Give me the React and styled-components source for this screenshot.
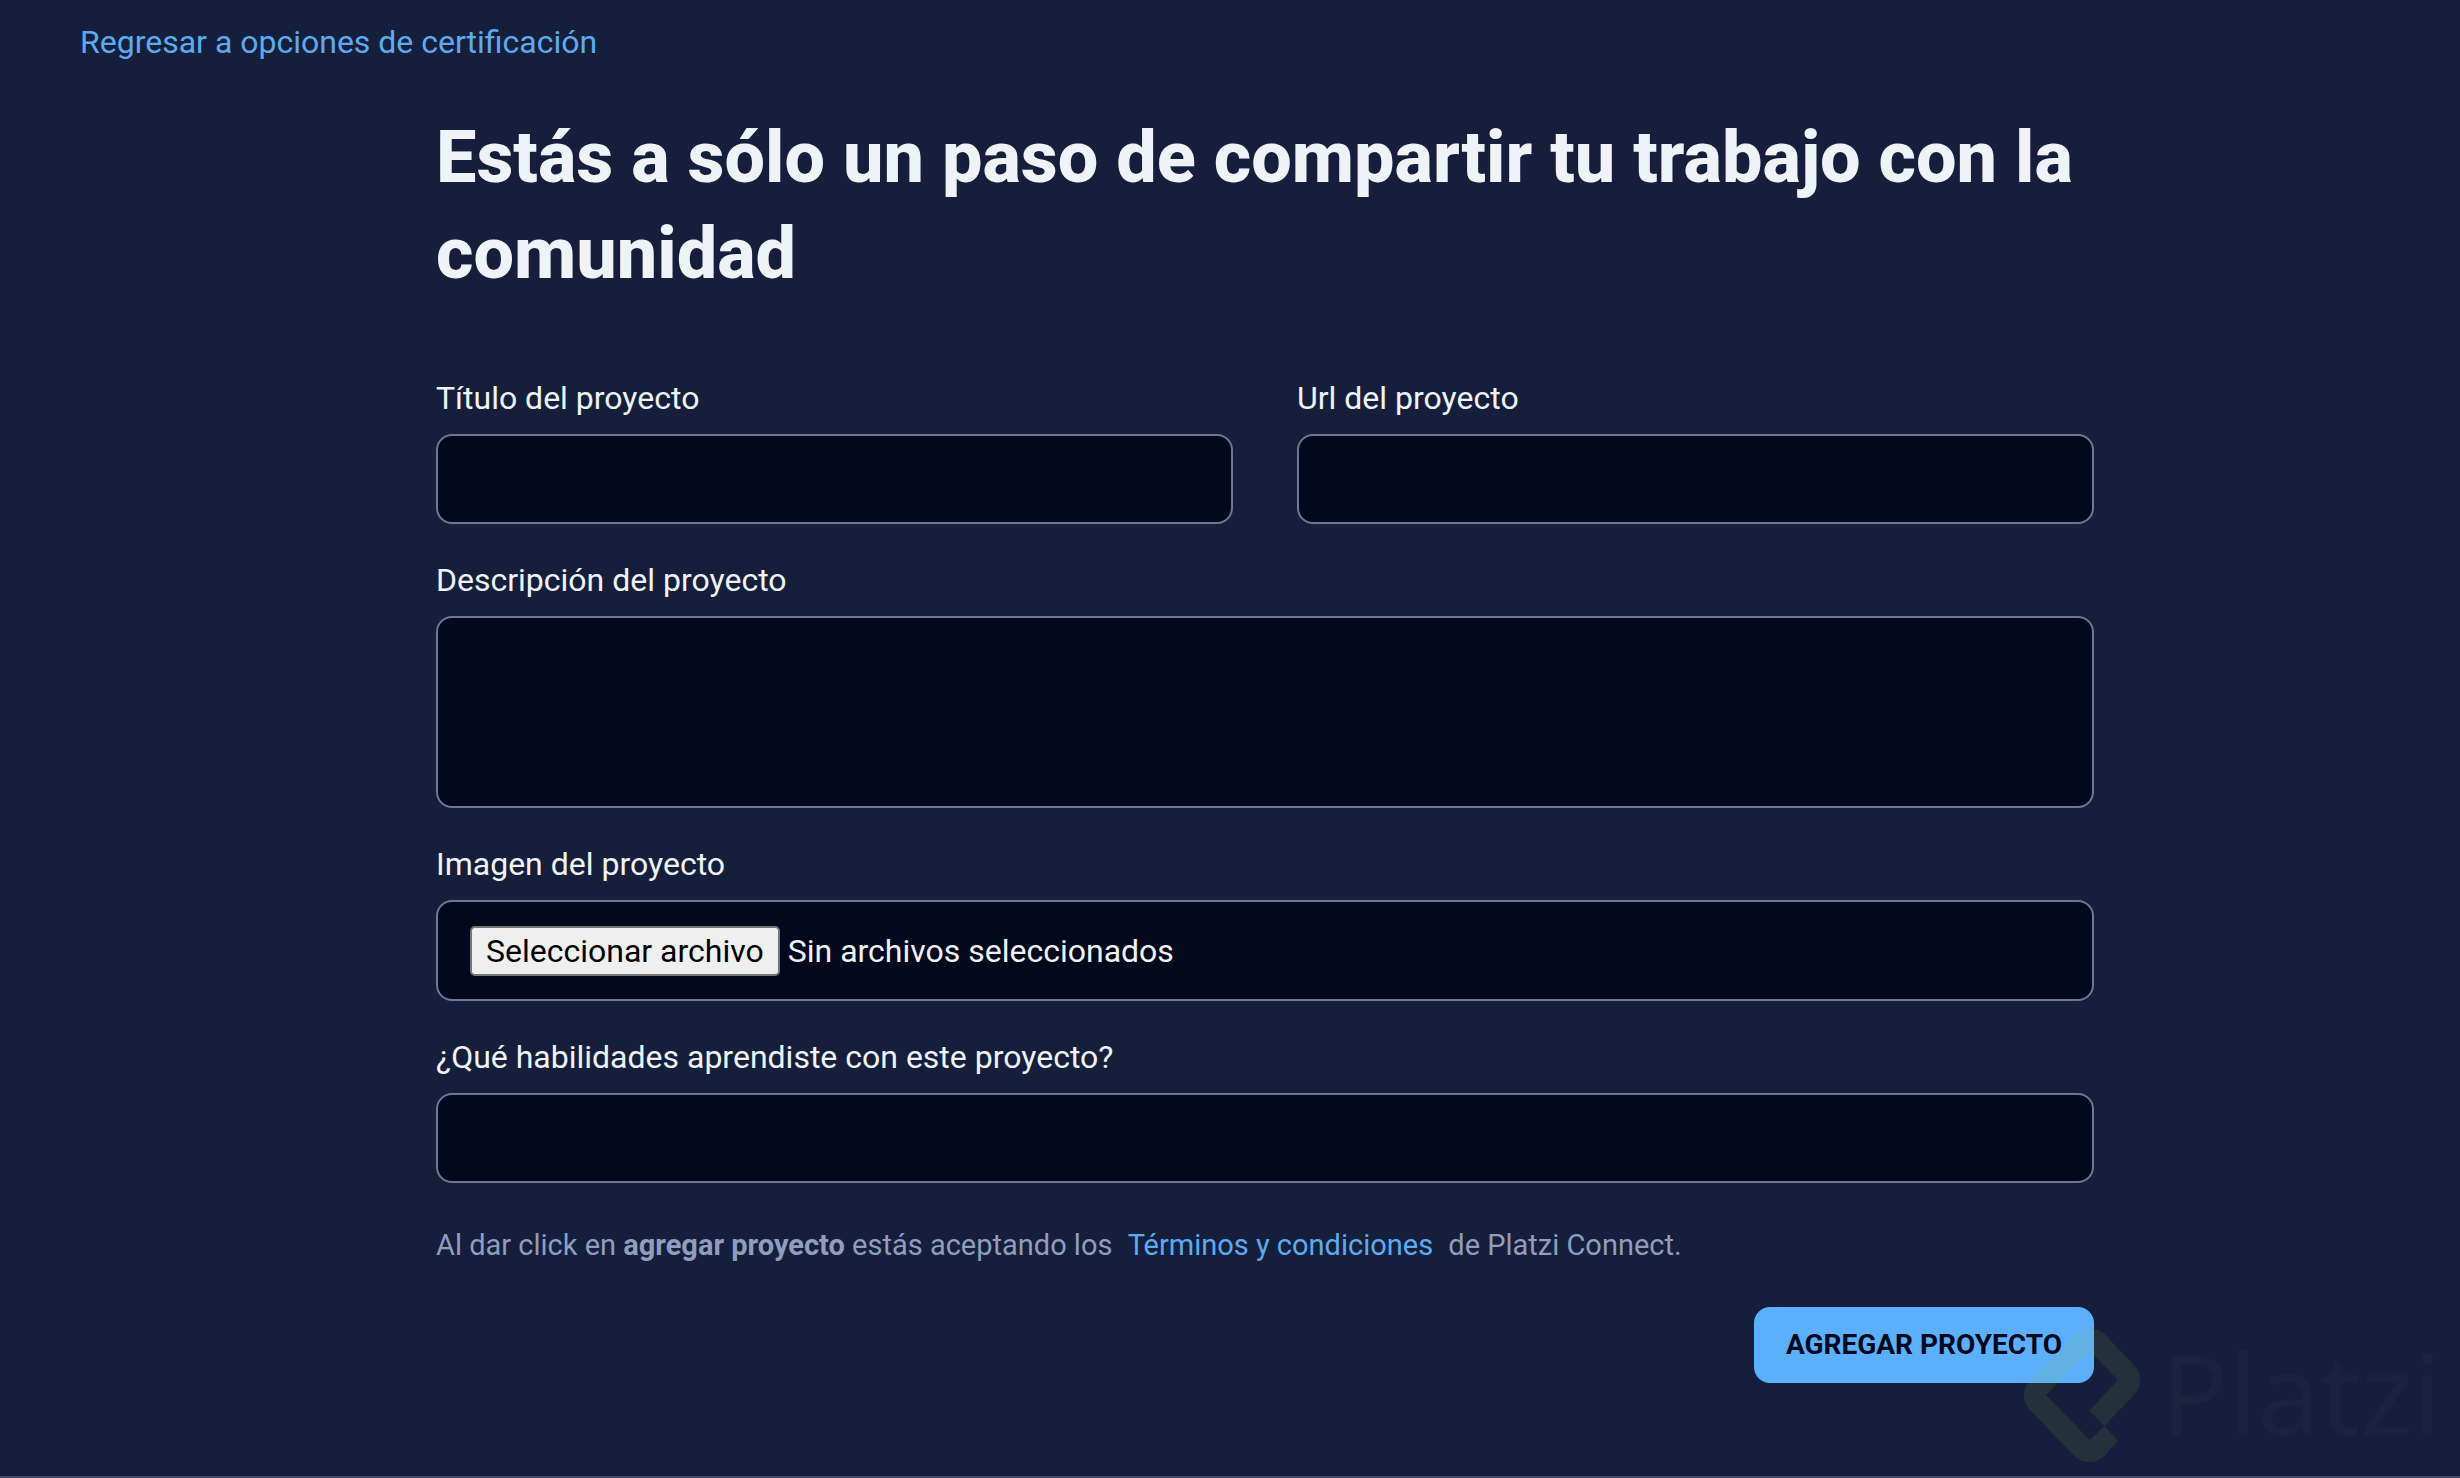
import React, { useState } from "react";
import styled, { createGlobalStyle, css } from "styled-components";

const color = {
  page: "#151f3b",
  field: "#03081c",
  border: "#6d7895",
  text: "#eff3f8",
  muted: "#909dbd",
  link: "#5eaaf0",
  action: "#5caffa",
  ink: "#03091e",
  rule: "#434a63",
};

const GlobalStyle = createGlobalStyle`
  *, *::before, *::after { box-sizing: border-box; }
  body {
    margin: 0;
    background: ${color.page};
    color: ${color.text};
    font-family: Roboto, "Liberation Sans", sans-serif;
    font-size: 32px;
    line-height: 40px;
  }
`;

const Page = styled.div`
  position: relative;
  display: flex;
  flex-direction: column;
  min-height: 100vh;
  overflow: hidden;
  border-bottom: 2px solid ${color.rule};
`;

const TopBar = styled.nav`
  padding: 22px 80px;
`;

const Link = styled.a`
  color: ${color.link};
  text-decoration: none;
`;

const Main = styled.main`
  padding: 26px 366px 90px 436px;
`;

const Title = styled.h1`
  margin: 0 0 76px;
  font-size: 72px;
  line-height: 96px;
  font-weight: 800;
`;

const Form = styled.form`
  display: flex;
  flex-direction: column;
  gap: 36px;
`;

const Row = styled.div`
  display: grid;
  grid-template-columns: 1fr 1fr;
  gap: 64px;
`;

const Field = styled.div`
  display: flex;
  flex-direction: column;
  gap: 16px;
`;

const Label = styled.label`
  display: block;
`;

const box = css`
  display: block;
  width: 100%;
  margin: 0;
  padding: 0 32px;
  border: 2px solid ${color.border};
  border-radius: 16px;
  background: ${color.field};
  color: ${color.text};
  font: inherit;
`;

const TextInput = styled.input`
  ${box}
  height: 90px;
`;

const TextArea = styled.textarea`
  ${box}
  height: 192px;
  padding: 24px 32px;
  resize: none;
`;

const FileBox = styled.div`
  ${box}
  display: flex;
  align-items: center;
  gap: 8px;
  height: 101px;
`;

const FileInput = styled.input`
  position: absolute;
  width: 1px;
  height: 1px;
  opacity: 0;
`;

const FileButton = styled.label`
  padding: 3px 14px;
  border: 2px solid #767676;
  border-radius: 5px;
  background: #efefef;
  color: #000;
`;

const Terms = styled.p`
  margin: 0;
  padding: 6px 0;
  color: ${color.muted};
  font-size: 29px;

  a {
    margin: 0 8px;
  }
`;

const Submit = styled.button`
  align-self: flex-end;
  height: 76px;
  padding: 0 32px;
  border: 0;
  border-radius: 16px;
  background: ${color.action};
  color: ${color.ink};
  font: inherit;
  font-size: 28px;
  font-weight: 700;
  text-transform: uppercase;
`;

const Watermark = styled.div`
  position: absolute;
  right: 18px;
  bottom: 12px;
  display: flex;
  align-items: flex-start;
  gap: 20px;
  pointer-events: none;
`;

const WatermarkName = styled.span`
  color: rgba(255, 255, 255, 0.02);
  font-family: "Noto Sans", "Open Sans", sans-serif;
  font-size: 112px;
  line-height: 130px;
`;

function Logo() {
  return (
    <svg width="117" height="137" viewBox="134 81 351 411" aria-hidden="true">
      <path
        fill="#98ca3f"
        fillOpacity="0.11"
        d="M330 332 L415 240 L331 152 L200 285 L331 420 L375 378 L417 422 L377 466 A65 65 0 0 1 285 468 L154 333 A65 65 0 0 1 154 239 L285 104 A65 65 0 0 1 377 104 L463 194 A65 65 0 0 1 463 286 L375 378 Z"
      />
    </svg>
  );
}

export default function App() {
  const [fileName, setFileName] = useState("");

  return (
    <Page>
      <GlobalStyle />
      <TopBar>
        <Link href="#opciones">Regresar a opciones de certificación</Link>
      </TopBar>
      <Main>
        <Title>Estás a sólo un paso de compartir tu trabajo con la comunidad</Title>
        <Form onSubmit={(event) => event.preventDefault()}>
          <Row>
            <Field>
              <Label htmlFor="titulo">Título del proyecto</Label>
              <TextInput id="titulo" type="text" />
            </Field>
            <Field>
              <Label htmlFor="url">Url del proyecto</Label>
              <TextInput id="url" type="url" />
            </Field>
          </Row>
          <Field>
            <Label htmlFor="descripcion">Descripción del proyecto</Label>
            <TextArea id="descripcion" />
          </Field>
          <Field>
            <Label htmlFor="imagen">Imagen del proyecto</Label>
            <FileBox>
              <FileInput
                id="imagen"
                type="file"
                accept="image/*"
                onChange={(event) => setFileName(event.target.files[0]?.name ?? "")}
              />
              <FileButton htmlFor="imagen">Seleccionar archivo</FileButton>
              <span>{fileName || "Sin archivos seleccionados"}</span>
            </FileBox>
          </Field>
          <Field>
            <Label htmlFor="habilidades">¿Qué habilidades aprendiste con este proyecto?</Label>
            <TextInput id="habilidades" type="text" />
          </Field>
          <Terms>
            Al dar click en <strong>agregar proyecto</strong> estás aceptando los{" "}
            <Link href="#terminos">Términos y condiciones</Link> de Platzi Connect.
          </Terms>
          <Submit type="submit">Agregar proyecto</Submit>
        </Form>
      </Main>
      <Watermark>
        <Logo />
        <WatermarkName>Platzi</WatermarkName>
      </Watermark>
    </Page>
  );
}
